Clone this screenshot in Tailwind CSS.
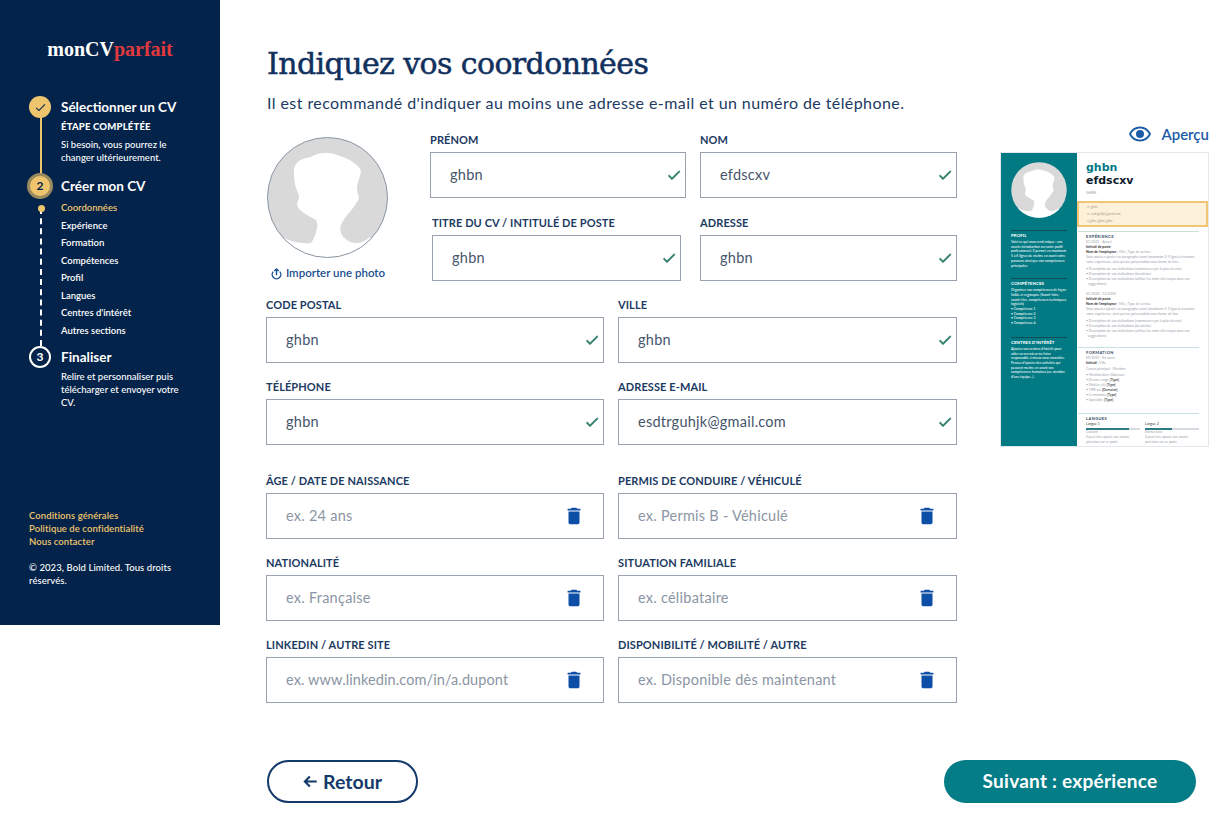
<!DOCTYPE html>
<html lang="fr">
<head>
  <meta charset="UTF-8" />
  <meta name="viewport" content="width=device-width, initial-scale=1" />
  <title>Indiquez vos coordonnées</title>
  <script src="https://cdn.jsdelivr.net/npm/@tailwindcss/browser@4"></script>
</head>
<body class="bg-white text-[#0b2a55] font-['Lato','Noto_Sans',sans-serif] h-[830px] overflow-hidden flex items-start">

  <!-- Sidebar -->
  <aside class="w-[220px] h-[625px] shrink-0 bg-[#04234a] text-white flex flex-col">
    <div class="pt-[38px] text-center font-['Liberation_Serif',serif] font-bold text-[20px] leading-[22px]">monCV<span class="text-[#e0393e]">parfait</span></div>

    <div class="relative mt-[35px] pl-[29px]">
      <div class="absolute left-[40px] top-[20px] h-[60px] w-[2px] bg-[#eec56d]"></div>
      <div class="absolute left-[40px] top-[113px] h-[138px] border-l-2 border-dashed border-white"></div>

      <!-- step 1 -->
      <div class="relative flex gap-[10px]">
        <div class="w-[22px] h-[22px] rounded-full bg-[#eec56d] flex items-center justify-center shrink-0 mt-[1px]">
          <svg viewBox="0 0 24 24" class="w-[13px] h-[13px]" fill="#04234a"><path d="M9 16.17 4.83 12l-1.42 1.41L9 19 21 7l-1.41-1.41z"/></svg>
        </div>
        <div>
          <div class="text-[13.5px] leading-[24px] font-bold">Sélectionner un CV</div>
          <div class="text-[9.5px] leading-[14px] font-black tracking-[0.2px] mt-[1px] whitespace-nowrap">ÉTAPE COMPLÉTÉE</div>
          <div class="text-[9.5px] leading-[13px] font-medium mt-[4px] w-[120px]">Si besoin, vous pourrez le changer ultérieurement.</div>
        </div>
      </div>

      <!-- step 2 -->
      <div class="relative flex gap-[10px] mt-[9px]">
        <div class="w-[26px] h-[26px] -ml-[2px] -mr-[2px] rounded-full bg-[#eec56d] border-[3px] border-[#9a8a5f] flex items-center justify-center shrink-0 text-[#04234a] text-[12px] font-bold">2</div>
        <div class="text-[13.5px] leading-[26px] font-bold">Créer mon CV</div>
      </div>
      <div class="absolute left-[37.500px] top-[110px] w-[7px] h-[7px] rounded-full bg-[#eec56d]"></div>
      <ul class="pl-[32px] text-[9.5px] leading-[17.5px] font-semibold">
        <li class="text-[#eec56d]">Coordonnées</li>
        <li>Expérience</li>
        <li>Formation</li>
        <li>Compétences</li>
        <li>Profil</li>
        <li>Langues</li>
        <li>Centres d'intérêt</li>
        <li>Autres sections</li>
      </ul>

      <!-- step 3 -->
      <div class="relative flex gap-[10px] mt-[7px]">
        <div class="w-[22px] h-[22px] rounded-full bg-[#04234a] border-2 border-white flex items-center justify-center shrink-0 text-[12px] font-bold">3</div>
        <div>
          <div class="text-[13.5px] leading-[22px] font-bold">Finaliser</div>
          <div class="text-[9.5px] leading-[13px] font-medium mt-[2px] w-[125px]">Relire et personnaliser puis télécharger et envoyer votre CV.</div>
        </div>
      </div>
    </div>

    <div class="mt-auto pl-[29px] pr-[30px] pb-[38px] text-[9.5px] leading-[13px] font-semibold tracking-[0.08px]">
      <div class="text-[#eec56d]">Conditions générales</div>
      <div class="text-[#eec56d]">Politique de confidentialité</div>
      <div class="text-[#eec56d]">Nous contacter</div>
      <div class="mt-[13px] font-medium">© 2023, Bold Limited. Tous droits réservés.</div>
    </div>
  </aside>

  <!-- Main -->
  <main class="pl-[46px] flex flex-col">
    <div class="flex">
      <div class="w-[691px] shrink-0">
        <h1 class="pt-[44px] pl-[1px] font-['DejaVu_Serif',serif] text-[30px] leading-[40px] tracking-[-0.6px] [-webkit-text-stroke:0.5px_#11305e] text-[#11305e] whitespace-nowrap">Indiquez vos coordonnées</h1>
        <p class="mt-[7px] pl-[1px] text-[16px] leading-[24px] tracking-[0.42px] text-[#1c3a62] whitespace-nowrap">Il est recommandé d'indiquer au moins une adresse e-mail et un numéro de téléphone.</p>

        <div class="flex mt-[13px]">
          <!-- photo -->
          <div class="w-[164px] shrink-0 pt-[9px] pl-[1px]">
            <svg viewBox="0 0 121 121" class="w-[121px] h-[121px]">
              <clipPath id="photo-clip"><circle cx="60.5" cy="60.5" r="60"/></clipPath>
              <g clip-path="url(#photo-clip)">
                <rect width="121" height="121" fill="#d9d9d9"/>
                <path fill="#fff" d="M57 16C50 16 46 19 44 20C38 21 32 23 30 26C26 30 27 34 27 38C27 43 28 47 29 51C30 54 32 57 32 60C32 63 30 65 30 68C31 72 34 74 37 76C41 79 46 81 49 83C50 86 51 88 50 91C49 96 47 102 44 106C35 107 24 105 15 100L-5 125L125 125L103 100C98 104 94 106 90 106C85 106 82 105 80 103C77 101 75 99 74 96C73 92 73 89 75 86C77 82 79 79 82 76C86 71 90 66 92 61C91 57 90 54 90 51C90 46 93 40 94 35C93 30 90 28 87 26C82 22 76 20 70 18C66 16 61 16 57 16Z"/>
              </g>
              <circle cx="60.5" cy="60.5" r="60" fill="none" stroke="#8b96a5" stroke-width="1"/>
            </svg>
            <div class="flex items-center gap-[3px] w-[121px] justify-center mt-[7px] text-[#1b4f8f] text-[11.5px] leading-[16px] font-semibold whitespace-nowrap">
              <svg viewBox="0 0 24 24" class="w-[13px] h-[13px] shrink-0" fill="none" stroke="#1b4f8f" stroke-width="2.6"><path d="M12 15V4M8 7.5 12 3.5l4 4"/><path d="M6 8.5a8 8 0 1 0 12 0"/></svg>
              Importer une photo
            </div>
          </div>

          <!-- fields next to the photo -->
          <div class="grid grid-cols-[256px_257px] gap-x-[14px] gap-y-[12px]">
            <div>
              <label class="block text-[11px] leading-[24px] font-bold tracking-[0.1px] text-[#1c3a62]">PRÉNOM</label>
              <div class="h-[46px] border border-[#98a2af] flex items-center justify-between pl-[19px] pr-[3px] text-[14.5px] tracking-[0.25px] text-[#45556b]">ghbn
                <svg viewBox="0 0 24 24" class="w-[16px] h-[16px]" fill="#2d7d69"><path d="M9 16.17 4.83 12l-1.42 1.41L9 19 21 7l-1.41-1.41z" stroke="#2d7d69"/></svg>
              </div>
            </div>
            <div>
              <label class="block text-[11px] leading-[24px] font-bold tracking-[0.1px] text-[#1c3a62]">NOM</label>
              <div class="h-[46px] border border-[#98a2af] flex items-center justify-between pl-[19px] pr-[3px] text-[14.5px] tracking-[0.25px] text-[#45556b]">efdscxv
                <svg viewBox="0 0 24 24" class="w-[16px] h-[16px]" fill="#2d7d69"><path d="M9 16.17 4.83 12l-1.42 1.41L9 19 21 7l-1.41-1.41z" stroke="#2d7d69"/></svg>
              </div>
            </div>
            <div class="ml-[2px] w-[249px]">
              <label class="block text-[11px] leading-[24px] font-bold tracking-[0.1px] text-[#1c3a62] whitespace-nowrap">TITRE DU CV / INTITULÉ DE POSTE</label>
              <div class="h-[46px] border border-[#98a2af] flex items-center justify-between pl-[19px] pr-[3px] text-[14.5px] tracking-[0.25px] text-[#45556b]">ghbn
                <svg viewBox="0 0 24 24" class="w-[16px] h-[16px]" fill="#2d7d69"><path d="M9 16.17 4.83 12l-1.42 1.41L9 19 21 7l-1.41-1.41z" stroke="#2d7d69"/></svg>
              </div>
            </div>
            <div>
              <label class="block text-[11px] leading-[24px] font-bold tracking-[0.1px] text-[#1c3a62]">ADRESSE</label>
              <div class="h-[46px] border border-[#98a2af] flex items-center justify-between pl-[19px] pr-[3px] text-[14.5px] tracking-[0.25px] text-[#45556b]">ghbn
                <svg viewBox="0 0 24 24" class="w-[16px] h-[16px]" fill="#2d7d69"><path d="M9 16.17 4.83 12l-1.42 1.41L9 19 21 7l-1.41-1.41z" stroke="#2d7d69"/></svg>
              </div>
            </div>
          </div>
        </div>

        <!-- filled fields -->
        <div class="grid grid-cols-[338px_339px] gap-x-[14px] gap-y-[12px] mt-[12px]">
          <div>
            <label class="block text-[11px] leading-[24px] font-bold tracking-[0.1px] text-[#1c3a62]">CODE POSTAL</label>
            <div class="h-[46px] border border-[#98a2af] flex items-center justify-between pl-[19px] pr-[3px] text-[14.5px] tracking-[0.25px] text-[#45556b]">ghbn
              <svg viewBox="0 0 24 24" class="w-[16px] h-[16px]" fill="#2d7d69"><path d="M9 16.17 4.83 12l-1.42 1.41L9 19 21 7l-1.41-1.41z" stroke="#2d7d69"/></svg>
            </div>
          </div>
          <div>
            <label class="block text-[11px] leading-[24px] font-bold tracking-[0.1px] text-[#1c3a62]">VILLE</label>
            <div class="h-[46px] border border-[#98a2af] flex items-center justify-between pl-[19px] pr-[3px] text-[14.5px] tracking-[0.25px] text-[#45556b]">ghbn
              <svg viewBox="0 0 24 24" class="w-[16px] h-[16px]" fill="#2d7d69"><path d="M9 16.17 4.83 12l-1.42 1.41L9 19 21 7l-1.41-1.41z" stroke="#2d7d69"/></svg>
            </div>
          </div>
          <div>
            <label class="block text-[11px] leading-[24px] font-bold tracking-[0.1px] text-[#1c3a62]">TÉLÉPHONE</label>
            <div class="h-[46px] border border-[#98a2af] flex items-center justify-between pl-[19px] pr-[3px] text-[14.5px] tracking-[0.25px] text-[#45556b]">ghbn
              <svg viewBox="0 0 24 24" class="w-[16px] h-[16px]" fill="#2d7d69"><path d="M9 16.17 4.83 12l-1.42 1.41L9 19 21 7l-1.41-1.41z" stroke="#2d7d69"/></svg>
            </div>
          </div>
          <div>
            <label class="block text-[11px] leading-[24px] font-bold tracking-[0.1px] text-[#1c3a62]">ADRESSE E-MAIL</label>
            <div class="h-[46px] border border-[#98a2af] flex items-center justify-between pl-[19px] pr-[3px] text-[14.5px] tracking-[0.25px] text-[#45556b]">esdtrguhjk@gmail.com
              <svg viewBox="0 0 24 24" class="w-[16px] h-[16px]" fill="#2d7d69"><path d="M9 16.17 4.83 12l-1.42 1.41L9 19 21 7l-1.41-1.41z" stroke="#2d7d69"/></svg>
            </div>
          </div>
        </div>

        <!-- optional fields -->
        <div class="grid grid-cols-[338px_339px] gap-x-[14px] gap-y-[12px] mt-[24px]">
          <div>
            <label class="block text-[11px] leading-[24px] font-bold tracking-[0.1px] text-[#1c3a62]">ÂGE / DATE DE NAISSANCE</label>
            <div class="h-[46px] border border-[#98a2af] flex items-center justify-between pl-[19px] pr-[18px] text-[14.5px] tracking-[0.25px] text-[#8b95a3]">ex. 24 ans
              <svg viewBox="0 0 24 24" class="w-[22px] h-[22px]" fill="#0d4ea6"><path d="M6 19c0 1.1.9 2 2 2h8c1.1 0 2-.9 2-2V7H6v12zM19 4h-3.5l-1-1h-5l-1 1H5v2h14V4z"/></svg>
            </div>
          </div>
          <div>
            <label class="block text-[11px] leading-[24px] font-bold tracking-[0.1px] text-[#1c3a62]">PERMIS DE CONDUIRE / VÉHICULÉ</label>
            <div class="h-[46px] border border-[#98a2af] flex items-center justify-between pl-[19px] pr-[18px] text-[14.5px] tracking-[0.25px] text-[#8b95a3]">ex. Permis B - Véhiculé
              <svg viewBox="0 0 24 24" class="w-[22px] h-[22px]" fill="#0d4ea6"><path d="M6 19c0 1.1.9 2 2 2h8c1.1 0 2-.9 2-2V7H6v12zM19 4h-3.5l-1-1h-5l-1 1H5v2h14V4z"/></svg>
            </div>
          </div>
          <div>
            <label class="block text-[11px] leading-[24px] font-bold tracking-[0.1px] text-[#1c3a62]">NATIONALITÉ</label>
            <div class="h-[46px] border border-[#98a2af] flex items-center justify-between pl-[19px] pr-[18px] text-[14.5px] tracking-[0.25px] text-[#8b95a3]">ex. Française
              <svg viewBox="0 0 24 24" class="w-[22px] h-[22px]" fill="#0d4ea6"><path d="M6 19c0 1.1.9 2 2 2h8c1.1 0 2-.9 2-2V7H6v12zM19 4h-3.5l-1-1h-5l-1 1H5v2h14V4z"/></svg>
            </div>
          </div>
          <div>
            <label class="block text-[11px] leading-[24px] font-bold tracking-[0.1px] text-[#1c3a62]">SITUATION FAMILIALE</label>
            <div class="h-[46px] border border-[#98a2af] flex items-center justify-between pl-[19px] pr-[18px] text-[14.5px] tracking-[0.25px] text-[#8b95a3]">ex. célibataire
              <svg viewBox="0 0 24 24" class="w-[22px] h-[22px]" fill="#0d4ea6"><path d="M6 19c0 1.1.9 2 2 2h8c1.1 0 2-.9 2-2V7H6v12zM19 4h-3.5l-1-1h-5l-1 1H5v2h14V4z"/></svg>
            </div>
          </div>
          <div>
            <label class="block text-[11px] leading-[24px] font-bold tracking-[0.1px] text-[#1c3a62]">LINKEDIN / AUTRE SITE</label>
            <div class="h-[46px] border border-[#98a2af] flex items-center justify-between pl-[19px] pr-[18px] text-[14.5px] tracking-[0.1px] text-[#8b95a3]">ex. www.linkedin.com/in/a.dupont
              <svg viewBox="0 0 24 24" class="w-[22px] h-[22px]" fill="#0d4ea6"><path d="M6 19c0 1.1.9 2 2 2h8c1.1 0 2-.9 2-2V7H6v12zM19 4h-3.5l-1-1h-5l-1 1H5v2h14V4z"/></svg>
            </div>
          </div>
          <div>
            <label class="block text-[11px] leading-[24px] font-bold tracking-[0.1px] text-[#1c3a62]">DISPONIBILITÉ / MOBILITÉ / AUTRE</label>
            <div class="h-[46px] border border-[#98a2af] flex items-center justify-between pl-[19px] pr-[18px] text-[14.5px] tracking-[0.25px] text-[#8b95a3]">ex. Disponible dès maintenant
              <svg viewBox="0 0 24 24" class="w-[22px] h-[22px]" fill="#0d4ea6"><path d="M6 19c0 1.1.9 2 2 2h8c1.1 0 2-.9 2-2V7H6v12zM19 4h-3.5l-1-1h-5l-1 1H5v2h14V4z"/></svg>
            </div>
          </div>
        </div>
      </div>

      <!-- CV preview -->
      <div class="ml-[43px] w-[209px] shrink-0 pt-[122px]">
        <div class="flex items-center justify-end gap-[9px] h-[24px] text-[#1b5ca8] text-[15px] font-semibold mb-[6px]">
          <svg viewBox="0 0 24 24" class="w-[24px] h-[24px]" fill="#1b5ca8"><path fill-rule="evenodd" d="M12 4.5C7 4.5 2.73 7.61 1 12c1.73 4.39 6 7.5 11 7.5s9.27-3.11 11-7.5c-1.73-4.39-6-7.5-11-7.5zm0 2c3.79 0 7.17 2.13 8.82 5.5-1.65 3.37-5.03 5.5-8.82 5.5S4.83 15.37 3.18 12C4.83 8.63 8.21 6.500 12 6.500z"/><circle cx="12" cy="12" r="4"/></svg>
          Aperçu
        </div>
        <div class="h-[295px] border border-[#e4e7eb] flex text-[3.4px] leading-[5px]">
          <div class="w-[76px] h-full bg-[#017a84] text-white px-[10px] shrink-0 leading-[4.7px]">
            <svg viewBox="0 0 121 121" class="w-[56px] h-[56px] mt-[9px]">
              <clipPath id="photo-clip-small"><circle cx="60.500" cy="60.500" r="60"/></clipPath>
              <g clip-path="url(#photo-clip-small)">
                <rect width="121" height="121" fill="#d9d9d9"/>
                <path fill="#fff" d="M57 16C50 16 46 19 44 20C38 21 32 23 30 26C26 30 27 34 27 38C27 43 28 47 29 51C30 54 32 57 32 60C32 63 30 65 30 68C31 72 34 74 37 76C41 79 46 81 49 83C50 86 51 88 50 91C49 96 47 102 44 106C35 107 24 105 15 100L-5 125L125 125L103 100C98 104 94 106 90 106C85 106 82 105 80 103C77 101 75 99 74 96C73 92 73 89 75 86C77 82 79 79 82 76C86 71 90 66 92 61C91 57 90 54 90 51C90 46 93 40 94 35C93 30 90 28 87 26C82 22 76 20 70 18C66 16 61 16 57 16Z"/>
              </g>
            </svg>
            <div class="mt-[12px] border-t border-[#0a4d55] pt-[2px] font-bold text-[4.500px] leading-[6px]">PROFIL</div>
            <div class="mt-[1px] font-medium">Voici ce qui vous rend unique : une courte introduction sur votre profil professionnel. Il permet en maximum 5 à 6 lignes de mettre en avant votre parcours ainsi que vos compétences principales.</div>
            <div class="mt-[10px] border-t border-[#0a4d55] pt-[2px] font-bold text-[4.500px] leading-[6px]">COMPÉTENCES</div>
            <div class="mt-[1px] font-medium">Organisez vos compétences de façon lisible et regroupée (Savoir-faire, savoir-être, compétences techniques, logiciels)
              <div>• Compétence 1</div><div>• Compétence 2</div><div>• Compétence 3</div><div>• Compétence 4</div>
            </div>
            <div class="mt-[11px] border-t border-[#0a4d55] pt-[2px] font-bold text-[4.500px] leading-[6px] whitespace-nowrap">CENTRES D'INTÉRÊT</div>
            <div class="mt-[1px] font-medium">Ajoutez vos centres d'intérêt pour aider un recruteur ou futur responsable à mieux vous connaître. Pensez d'ajouter des activités qui peuvent mettre en avant vos compétences humaines (ex. membre d'une équipe...).</div>
          </div>
          <div class="flex-1 min-w-0 text-[#9aa1aa]">
            <div class="pl-[9px] pt-[8px]">
              <div class="text-[#017a84] font-['DejaVu_Sans',sans-serif] font-bold text-[11px] leading-[13px]">ghbn</div>
              <div class="text-[#0d1b2a] font-['DejaVu_Sans',sans-serif] font-bold text-[11px] leading-[13px]">efdscxv</div>
              <div class="mt-[3.500px] text-[3.500px] leading-[5px]">GHBN</div>
            </div>
            <div class="mt-[5.500px] h-[26px] bg-[#fdf1da] border-2 border-[#f0c674] pl-[8px] pt-[1px] text-[3px] leading-[7px] text-[#a89c84]">
              <div>✆ ghbn</div>
              <div>➤ esdtrguhjk@gmail.com</div>
              <div>⚲ ghbn, ghbn, ghbn</div>
            </div>
            <div class="mx-[1px] mr-[9px] mt-[4px] border-t border-[#c7e0e6] pl-[8px] pt-[2px]">
              <div class="font-bold text-[#32475f] text-[4px] leading-[5px] tracking-[0.4px]">EXPÉRIENCE</div>
              <div class="mt-[1px]">01/2021 - Actuel</div>
              <div class="text-[#333] font-bold">Intitulé de poste</div>
              <div class="whitespace-nowrap"><b class="text-[#333]">Nom de l'employeur</b> | Ville | Type de service</div>
              <div class="whitespace-nowrap">Vous pouvez ajouter un paragraphe court (maximum 2-3 lignes) résumant</div>
              <div class="whitespace-nowrap">votre expérience, ainsi qu'une présentation sous forme de liste</div>
              <div class="mt-[2px] whitespace-nowrap">• Description de vos réalisations (commencer par la plus récente)</div>
              <div class="whitespace-nowrap">• Description de vos réalisations (deuxième)</div>
              <div class="whitespace-nowrap">• Description de vos réalisations (utiliser les mots-clés requis dans vos</div>
              <div class="pl-[2px]">suggestions)</div>
              <div class="mt-[5px]">01/2020 - 12/2020</div>
              <div class="text-[#333] font-bold">Intitulé de poste</div>
              <div class="whitespace-nowrap"><b class="text-[#333]">Nom de l'employeur</b> | Ville | Type de service</div>
              <div class="whitespace-nowrap">Vous pouvez ajouter un paragraphe court (maximum 2-3 lignes) résumant</div>
              <div class="whitespace-nowrap">votre expérience, ainsi qu'une présentation sous forme de liste</div>
              <div class="mt-[2px] whitespace-nowrap">• Description de vos réalisations (commencer par la plus récente)</div>
              <div class="whitespace-nowrap">• Description de vos réalisations (deuxième)</div>
              <div class="whitespace-nowrap">• Description de vos réalisations (utiliser les mots-clés requis dans vos</div>
              <div class="pl-[2px]">suggestions)</div>
            </div>
            <div class="mx-[1px] mr-[9px] mt-[8px] border-t border-[#c7e0e6] pl-[8px] pt-[2px]">
              <div class="font-bold text-[#32475f] text-[4px] leading-[5px] tracking-[0.4px]">FORMATION</div>
              <div class="mt-[1px]">09/2019 - En cours</div>
              <div><b class="text-[#333]">Intitulé</b> | Ville</div>
              <div class="mt-[1px]">Cursus principal - Mention</div>
              <div class="mt-[1px]">• Mention bien [Obtenue]</div>
              <div>• Dernier stage <b class="text-[#555]">[Type]</b></div>
              <div>• Matière clé <b class="text-[#555]">[Type]</b></div>
              <div>• TIPE sur <b class="text-[#555]">[Domaine]</b></div>
              <div>• Le mémoire <b class="text-[#555]">[Type]</b></div>
              <div>• Spécialité <b class="text-[#555]">[Type]</b></div>
            </div>
            <div class="mx-[1px] mr-[9px] mt-[10px] border-t border-[#c7e0e6] pl-[8px] pt-[2px]">
              <div class="font-bold text-[#32475f] text-[4px] leading-[5px] tracking-[0.4px]">LANGUES</div>
              <div class="flex gap-[5px] mt-[1px]">
                <div class="w-[54px]">
                  <div class="text-[#333]">Langue 1</div>
                  <div class="h-[2px] bg-[#d5dbe0] mt-[1px]"><div class="h-full w-[80%] bg-[#2c7c86]"></div></div>
                  <div>Courant</div>
                  <div>Il peut être ajouté une courte précision sur ce point</div>
                </div>
                <div class="w-[54px]">
                  <div class="text-[#333]">Langue 2</div>
                  <div class="h-[2px] bg-[#d5dbe0] mt-[1px]"><div class="h-full w-[50%] bg-[#2c7c86]"></div></div>
                  <div>Élémentaire</div>
                  <div>Il peut être ajouté une courte précision sur ce point</div>
                </div>
              </div>
            </div>
          </div>
        </div>
      </div>
    </div>

    <!-- Navigation buttons -->
    <div class="w-[930px] pl-[1px] flex justify-between mt-[57px]">
      <button class="w-[151px] h-[43px] rounded-full border-2 border-[#133a6b] text-[#133a6b] font-bold text-[19.5px] flex items-center justify-center gap-[5px]">
        <svg viewBox="0 0 24 24" class="w-[15px] h-[15px]" fill="none" stroke="#133a6b" stroke-width="3.4"><path d="M22 12H4M11 4l-8 8 8 8"/></svg>
        Retour
      </button>
      <button class="w-[252px] h-[43px] rounded-full bg-[#047d87] text-white font-bold text-[19px] tracking-[0.25px]">Suivant : expérience</button>
    </div>
  </main>
</body>
</html>
